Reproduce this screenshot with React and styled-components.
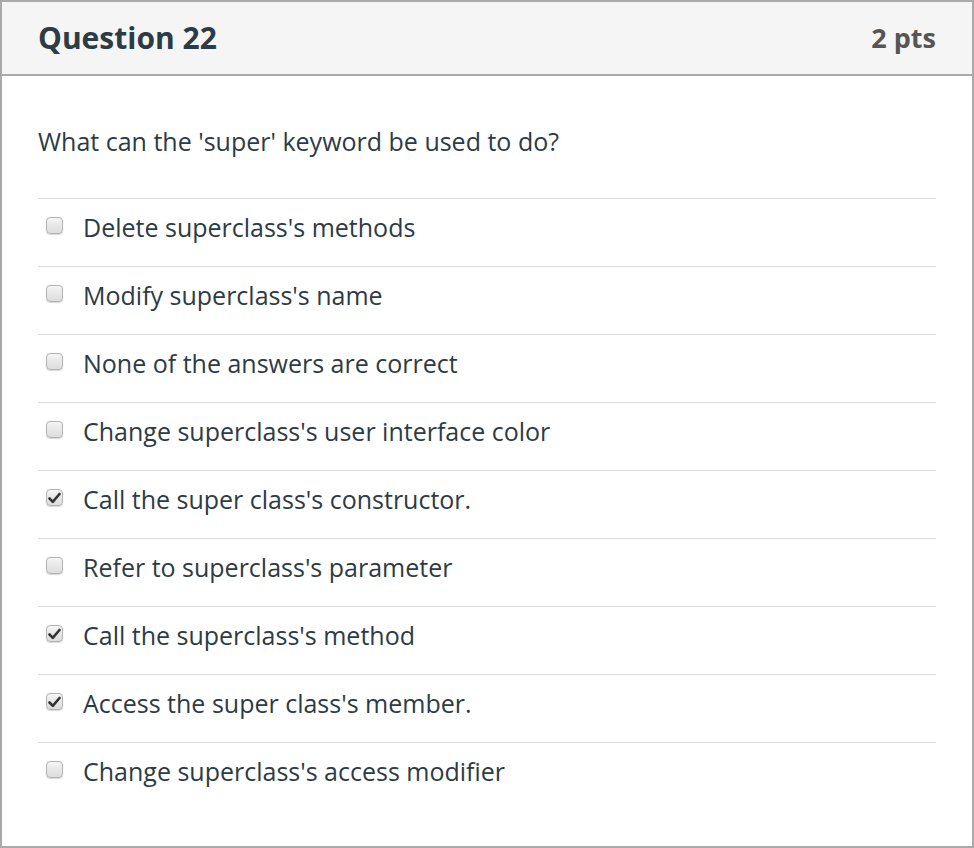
import React from "react";
import styled, { createGlobalStyle } from "styled-components";

const Global = createGlobalStyle`
  html, body { margin: 0; padding: 0; background: #fff; }
  body { font-family: "Open Sans", "Liberation Sans", sans-serif; color: #2d3b45; }
  * { box-sizing: border-box; }
`;

const Card = styled.div`
  width: 974px;
  height: 848px;
  border: 2px solid #aaaaaa;
  display: flex;
  flex-direction: column;
  background: #fff;
`;

const Header = styled.div`
  height: 74px;
  background: #f5f5f5;
  border-bottom: 2px solid #aaaaaa;
  display: flex;
  align-items: center;
  justify-content: space-between;
  padding: 0 36px 1px 36px;
`;

const Title = styled.h2`
  margin: 0;
  font-size: 30px;
  font-weight: 700;
  color: #2d3b45;
  line-height: 1;
`;

const Points = styled.span`
  font-size: 27px;
  font-weight: 700;
  color: #555555;
`;

const Body = styled.div`
  padding: 50px 36px 0 36px;
`;

const Prompt = styled.p`
  margin: 0 0 42px 0;
  font-size: 25px;
  line-height: 30px;
`;

const Answers = styled.ul`
  list-style: none;
  margin: 0;
  padding: 0;
`;

const Answer = styled.li`
  height: 68px;
  border-top: 1px solid #dddddd;
  display: flex;
  align-items: flex-start;
  padding: 13px 0 0 8px;
  gap: 20px;
  font-size: 25px;
  line-height: 30px;
`;

const Box = styled.span`
  width: 17px;
  height: 17px;
  margin-top: 5px;
  border-radius: 4px;
  border: 1px solid #b3b3b3;
  background: linear-gradient(#f4f4f4, #dcdcdc);
  box-shadow: 0 1px 1px rgba(0, 0, 0, 0.15);
  display: flex;
  align-items: center;
  justify-content: center;
  flex-shrink: 0;
`;

const Label = styled.span`
  color: #2d3b45;
`;

const Check = () => (
  <svg width="13" height="12" viewBox="0 0 13 12">
    <path d="M1.5 6.5 L4.8 9.8 L11.5 2" fill="none" stroke="#333" strokeWidth="2.6" strokeLinecap="round" strokeLinejoin="round" />
  </svg>
);

const answers = [
  ["Delete superclass's methods", false],
  ["Modify superclass's name", false],
  ["None of the answers are correct", false],
  ["Change superclass's user interface color", false],
  ["Call the super class's constructor.", true],
  ["Refer to superclass's parameter", false],
  ["Call the superclass's method", true],
  ["Access the super class's member.", true],
  ["Change superclass's access modifier", false],
];

export default function App() {
  return (
    <>
      <Global />
      <Card>
        <Header>
          <Title>Question 22</Title>
          <Points>2 pts</Points>
        </Header>
        <Body>
          <Prompt>What can the 'super' keyword be used to do?</Prompt>
          <Answers>
            {answers.map(([text, checked]) => (
              <Answer key={text}>
                <Box>{checked && <Check />}</Box>
                <Label>{text}</Label>
              </Answer>
            ))}
          </Answers>
        </Body>
      </Card>
    </>
  );
}
